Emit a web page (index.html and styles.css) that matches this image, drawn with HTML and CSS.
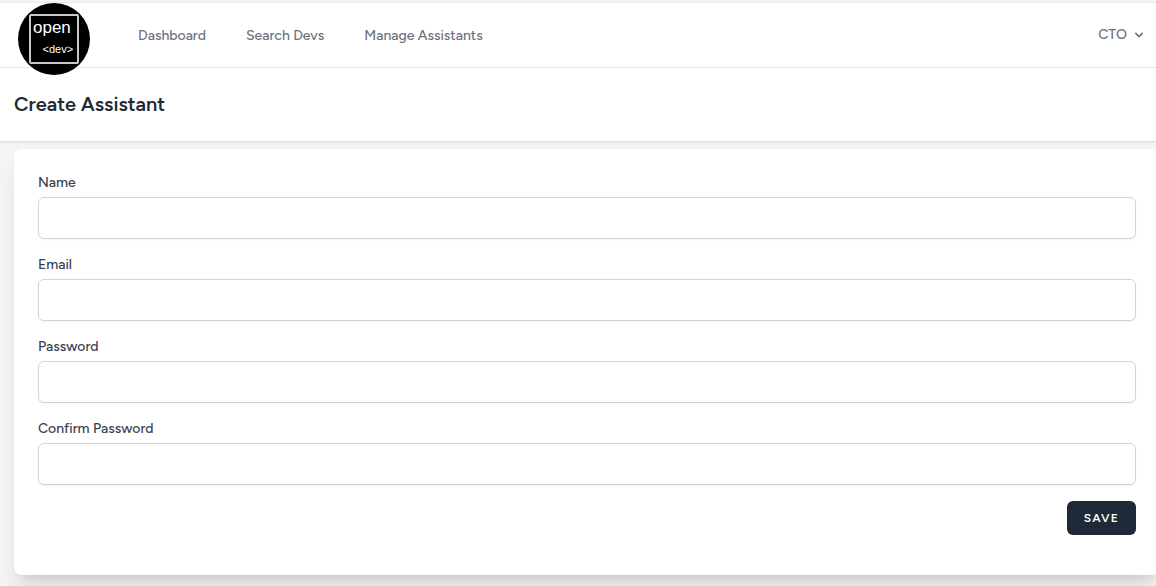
FILE: index.html
```
<!DOCTYPE html>
<html lang="en">
<head>
<meta charset="utf-8">
<meta name="viewport" content="width=device-width, initial-scale=1">
<title>Create Assistant</title>
<link rel="stylesheet" href="styles.css">
</head>
<body>
<nav class="nav">
  <a class="logo" href="#" aria-label="open dev">
    <svg width="72" height="72" viewBox="0 0 72 72">
      <circle cx="36" cy="36" r="36" fill="#000"/>
      <rect x="12" y="12" width="48" height="48" rx="1" fill="none" stroke="#c8c8c8" stroke-width="2"/>
      <text class="logo-open" x="15" y="30">open</text>
      <text class="logo-dev" x="24.5" y="50">&lt;dev&gt;</text>
    </svg>
  </a>
  <div class="links">
    <a class="link" href="#">Dashboard</a>
    <a class="link" href="#">Search Devs</a>
    <a class="link" href="#">Manage Assistants</a>
  </div>
  <button class="account" type="button">CTO
    <svg width="16" height="16" viewBox="0 0 20 20" fill="currentColor"><path fill-rule="evenodd" clip-rule="evenodd" d="M5.293 7.293a1 1 0 011.414 0L10 10.586l3.293-3.293a1 1 0 111.414 1.414l-4 4a1 1 0 01-1.414 0l-4-4a1 1 0 010-1.414z"/></svg>
  </button>
</nav>
<header class="header">
  <h1 class="title">Create Assistant</h1>
</header>
<main class="main">
  <form class="card">
    <div class="field"><label class="label" for="name">Name</label><input class="input" id="name" type="text"></div>
    <div class="field"><label class="label" for="email">Email</label><input class="input" id="email" type="email"></div>
    <div class="field"><label class="label" for="password">Password</label><input class="input" id="password" type="password"></div>
    <div class="field"><label class="label" for="confirm">Confirm Password</label><input class="input" id="confirm" type="password"></div>
    <div class="actions"><button class="save" type="submit">Save</button></div>
  </form>
</main>
</body>
</html>
```
FILE: styles.css
```
* { box-sizing: border-box; }

body {
  margin: 0;
  padding-top: 2px;
  min-height: 100vh;
  overflow-x: hidden;
  background: #f3f4f6;
  color: #1f2937;
  font-family: Figtree, Lato, sans-serif;
}

.nav {
  display: flex;
  align-items: center;
  height: 66px;
  padding: 0 12px 0 18px;
  background: #fff;
  border-top: 1px solid #e9ebee;
  border-bottom: 1px solid #e9ebee;
}

.logo {
  align-self: flex-start;
  height: 72px;
  position: relative;
  z-index: 1;
}

.logo svg { display: block; }

.logo text {
  fill: #fff;
  font-family: "Liberation Sans", Arial, sans-serif;
}

.logo .logo-open { font-size: 17px; }
.logo .logo-dev { font-size: 11px; }

.links {
  display: flex;
  gap: 40px;
  margin-left: 48px;
  padding-top: 2px;
}

.link,
.account {
  color: #6b7280;
  font-size: 14px;
  font-weight: 500;
  line-height: 20px;
  text-decoration: none;
}

.account {
  display: flex;
  align-items: center;
  gap: 4px;
  margin-left: auto;
  padding: 0;
  border: 0;
  background: none;
  font-family: inherit;
}

.account svg { margin-right: -3px; }

.header {
  padding: 24px 14px;
  background: #fff;
  box-shadow: 0 1px 3px rgba(0, 0, 0, 0.1), 0 1px 2px -1px rgba(0, 0, 0, 0.1);
}

.title {
  margin: 0;
  font-size: 20px;
  font-weight: 600;
  line-height: 25px;
}

.main {
  padding: 8px 0 11px 14px;
  overflow: hidden;
}

.card {
  display: flex;
  flex-direction: column;
  gap: 16px;
  margin-right: -4px;
  padding: 24px 24px 40px;
  background: #fff;
  border-radius: 8px;
  box-shadow: 0 20px 25px -5px rgba(0, 0, 0, 0.1), 0 8px 10px -6px rgba(0, 0, 0, 0.1);
}

.field {
  display: flex;
  flex-direction: column;
  gap: 4px;
}

.label {
  color: #374151;
  font-size: 14px;
  font-weight: 500;
  line-height: 20px;
}

.input {
  width: 100%;
  height: 42px;
  padding: 8px 12px;
  border: 1px solid #d1d5db;
  border-radius: 6px;
  background: #fff;
  box-shadow: 0 1px 2px rgba(0, 0, 0, 0.05);
  font: inherit;
}

.actions {
  display: flex;
  justify-content: flex-end;
}

.save {
  padding: 8px 16px;
  border: 1px solid transparent;
  border-radius: 6px;
  background: #1f2937;
  color: #fff;
  font-family: inherit;
  font-size: 12px;
  font-weight: 600;
  line-height: 16px;
  letter-spacing: 0.1em;
  text-transform: uppercase;
}
```
